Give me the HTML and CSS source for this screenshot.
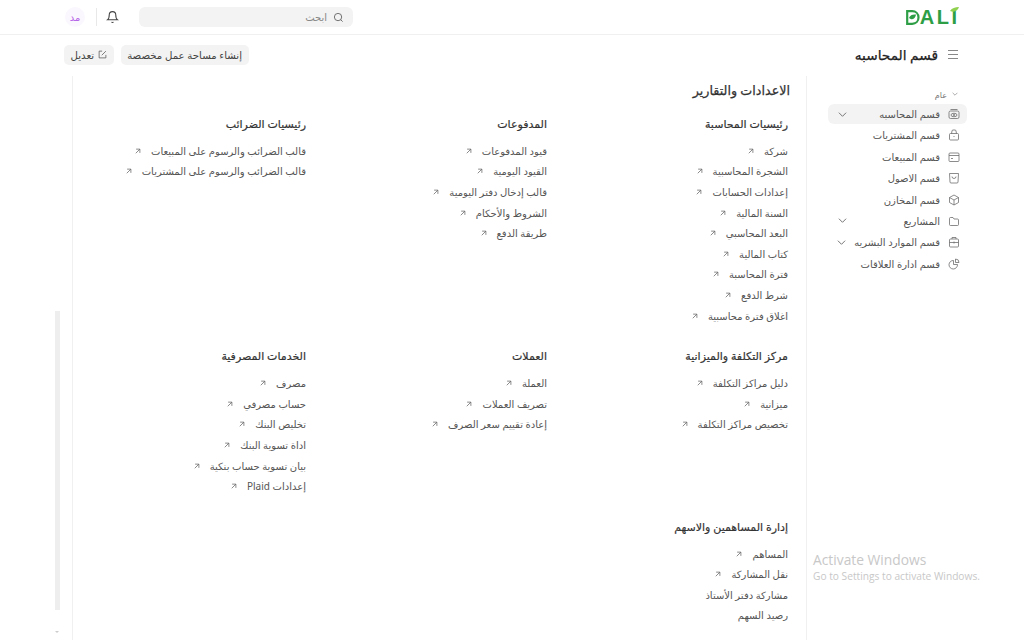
FILE: index.html
```html
<!DOCTYPE html>
<html lang="ar" dir="rtl">
<head>
  <meta charset="UTF-8" />
  <title>قسم المحاسبه</title>
  <link rel="stylesheet" href="styles.css">
</head>
<body>
  <svg class="defs" width="0" height="0">
    <symbol id="arrow" viewBox="0 0 8 8"><path d="M1.500 1.500h5v5M6.500 1.500L1 7"/></symbol>
    <symbol id="chev" viewBox="0 0 10 10"><path d="M1 3l4 4 4-4"/></symbol>
  </svg>

  <header class="topbar">
    <div class="logo" dir="ltr">
      <svg width="14" height="15" viewBox="0 0 14 15"><path d="M1.200 1.200h5c3.600 0 6.300 2.600 6.300 6.300s-2.700 6.300-6.300 6.300h-5z" fill="none" stroke="#2e9e46" stroke-width="2.200"/><path d="M3 8c1-3 4-4 7-3.500C9.500 8 7 11 3 8z" fill="#2e9e46"/></svg>
      <span class="logo-text">ALI</span>
      <svg class="leaf" width="9" height="6" viewBox="0 0 9 6"><path d="M0 4c2-3 5-4 9-4-1 3-4 6-9 4z" fill="#8fd14f"/></svg>
    </div>
    <div class="top-tools">
      <label class="search">
        <svg width="11" height="11" viewBox="0 0 24 24" fill="none" stroke="#666" stroke-width="2"><circle cx="11" cy="11" r="8"/><path d="M21 21l-4.300-4.300"/></svg>
        <span>ابحث</span>
      </label>
      <svg class="bell" width="13" height="14" viewBox="0 0 24 24" fill="none" stroke="#444" stroke-width="2"><path d="M6 8a6 6 0 0 1 12 0c0 7 3 9 3 9H3s3-2 3-9"/><path d="M10.300 21a1.900 1.900 0 0 0 3.400 0"/></svg>
      <span class="divider"></span>
      <div class="avatar">مد</div>
    </div>
  </header>

  <div class="page-head">
    <div class="page-title">
      <svg width="10" height="11" viewBox="0 0 10 11" stroke="#888" stroke-width="1"><path d="M0 1.500h10M0 5.500h10M0 9.500h10"/></svg>
      <h1>قسم المحاسبه</h1>
    </div>
    <div class="page-actions">
      <button class="btn">إنشاء مساحة عمل مخصصة</button>
      <button class="btn">
        <svg width="9" height="9" viewBox="0 0 24 24" fill="none" stroke="#555" stroke-width="2"><path d="M21 13v8H3V3h8"/><path d="M10 14L21 3"/></svg>
        تعديل
      </button>
    </div>
  </div>

  <div class="layout">
    <aside class="sidebar">
      <div class="side-label"><svg class="mini"><use href="#chev"/></svg>عام</div>
      <nav class="side-nav">
        <a class="side-item active"><svg class="ic" viewBox="0 0 24 24"><rect x="2" y="6" width="20" height="15" rx="3"/><path d="M5 3h14"/><ellipse cx="12" cy="14" rx="6" ry="3.500"/><circle cx="12" cy="14" r="1.500"/></svg><span>قسم المحاسبه</span><svg class="chev"><use href="#chev"/></svg></a>
        <a class="side-item"><svg class="ic" viewBox="0 0 24 24"><rect x="3" y="9" width="18" height="13" rx="2"/><path d="M7 9l1-5a2 2 0 0 1 2-2h4a2 2 0 0 1 2 2l1 5"/><path d="M11 15h2"/></svg><span>قسم المشتريات</span></a>
        <a class="side-item"><svg class="ic" viewBox="0 0 24 24"><rect x="2" y="4" width="20" height="17" rx="2"/><path d="M2 9h20M6 15h4"/></svg><span>قسم المبيعات</span></a>
        <a class="side-item"><svg class="ic" viewBox="0 0 24 24"><path d="M3 3h18l-1 17a2 2 0 0 1-2 2H6a2 2 0 0 1-2-2z"/><path d="M8 9a4 4 0 0 0 8 0"/></svg><span>قسم الاصول</span></a>
        <a class="side-item"><svg class="ic" viewBox="0 0 24 24"><path d="M12 2l9 5v10l-9 5-9-5V7z"/><path d="M3 7l9 5 9-5M12 12v10"/></svg><span>قسم المخازن</span></a>
        <a class="side-item"><svg class="ic" viewBox="0 0 24 24"><path d="M3 7a2 2 0 0 1 2-2h5l2 3h7a2 2 0 0 1 2 2v9a2 2 0 0 1-2 2H5a2 2 0 0 1-2-2z"/></svg><span>المشاريع</span><svg class="chev"><use href="#chev"/></svg></a>
        <a class="side-item"><svg class="ic" viewBox="0 0 24 24"><rect x="3" y="6" width="18" height="16" rx="2"/><path d="M8 6V3h8v3M3 13h18M12 11v4"/></svg><span>قسم الموارد البشريه</span><svg class="chev"><use href="#chev"/></svg></a>
        <a class="side-item"><svg class="ic" viewBox="0 0 24 24"><path d="M11 5a8.500 8.500 0 1 0 8 8h-8z"/><path d="M15 2a7 7 0 0 1 7 7h-7z"/></svg><span>قسم ادارة العلاقات</span></a>
      </nav>
    </aside>

    <main class="content">
      <h2 class="content-title">الاعدادات والتقارير</h2>
      <div class="card-grid">
        <section class="card">
          <h3>رئيسيات المحاسبة</h3>
          <ul>
            <li>شركة<svg class="arrow"><use href="#arrow"/></svg></li>
            <li>الشجرة المحاسبية<svg class="arrow"><use href="#arrow"/></svg></li>
            <li>إعدادات الحسابات<svg class="arrow"><use href="#arrow"/></svg></li>
            <li>السنة المالية<svg class="arrow"><use href="#arrow"/></svg></li>
            <li>البعد المحاسبي<svg class="arrow"><use href="#arrow"/></svg></li>
            <li>كتاب المالية<svg class="arrow"><use href="#arrow"/></svg></li>
            <li>فترة المحاسبة<svg class="arrow"><use href="#arrow"/></svg></li>
            <li>شرط الدفع<svg class="arrow"><use href="#arrow"/></svg></li>
            <li>اغلاق فترة محاسبية<svg class="arrow"><use href="#arrow"/></svg></li>
          </ul>
        </section>
        <section class="card">
          <h3>المدفوعات</h3>
          <ul>
            <li>قيود المدفوعات<svg class="arrow"><use href="#arrow"/></svg></li>
            <li>القيود اليومية<svg class="arrow"><use href="#arrow"/></svg></li>
            <li>قالب إدخال دفتر اليومية<svg class="arrow"><use href="#arrow"/></svg></li>
            <li>الشروط والأحكام<svg class="arrow"><use href="#arrow"/></svg></li>
            <li>طريقة الدفع<svg class="arrow"><use href="#arrow"/></svg></li>
          </ul>
        </section>
        <section class="card">
          <h3>رئيسيات الضرائب</h3>
          <ul>
            <li>قالب الضرائب والرسوم على المبيعات<svg class="arrow"><use href="#arrow"/></svg></li>
            <li>قالب الضرائب والرسوم على المشتريات<svg class="arrow"><use href="#arrow"/></svg></li>
          </ul>
        </section>
        <section class="card">
          <h3>مركز التكلفة والميزانية</h3>
          <ul>
            <li>دليل مراكز التكلفة<svg class="arrow"><use href="#arrow"/></svg></li>
            <li>ميزانية<svg class="arrow"><use href="#arrow"/></svg></li>
            <li>تخصيص مراكز التكلفة<svg class="arrow"><use href="#arrow"/></svg></li>
          </ul>
        </section>
        <section class="card">
          <h3>العملات</h3>
          <ul>
            <li>العملة<svg class="arrow"><use href="#arrow"/></svg></li>
            <li>تصريف العملات<svg class="arrow"><use href="#arrow"/></svg></li>
            <li>إعادة تقييم سعر الصرف<svg class="arrow"><use href="#arrow"/></svg></li>
          </ul>
        </section>
        <section class="card">
          <h3>الخدمات المصرفية</h3>
          <ul>
            <li>مصرف<svg class="arrow"><use href="#arrow"/></svg></li>
            <li>حساب مصرفي<svg class="arrow"><use href="#arrow"/></svg></li>
            <li>تخليص البنك<svg class="arrow"><use href="#arrow"/></svg></li>
            <li>اداة تسوية البنك<svg class="arrow"><use href="#arrow"/></svg></li>
            <li>بيان تسوية حساب بنكية<svg class="arrow"><use href="#arrow"/></svg></li>
            <li>إعدادات Plaid<svg class="arrow"><use href="#arrow"/></svg></li>
          </ul>
        </section>
        <section class="card">
          <h3>إدارة المساهمين والاسهم</h3>
          <ul>
            <li>المساهم<svg class="arrow"><use href="#arrow"/></svg></li>
            <li>نقل المشاركة<svg class="arrow"><use href="#arrow"/></svg></li>
            <li>مشاركة دفتر الأستاذ</li>
            <li>رصيد السهم</li>
          </ul>
        </section>
      </div>
    </main>

    <div class="gutter">
      <div class="scroll-thumb"></div>
      <div class="scroll-arrow"></div>
    </div>
  </div>

  <div class="activate" dir="ltr">
    <div class="activate-title">Activate Windows</div>
    <div class="activate-sub">Go to Settings to activate Windows.</div>
  </div>
</body>
</html>
```

FILE: styles.css
```css
* {
  box-sizing: border-box;
}
body {
  margin: 0;
  height: 640px;
  overflow: hidden;
  background: #fff;
  color: #555;
  font-family: "Noto Sans", "DejaVu Sans", sans-serif;
  font-size: 10px;
}
.defs {
  position: absolute;
}
.topbar {
  height: 35px;
  border-bottom: 1px solid #f0f0f0;
  display: flex;
  align-items: center;
  justify-content: space-between;
  padding: 0 67px 0 65px;
}
.logo {
  position: relative;
  display: flex;
  align-items: center;
}
.logo-text {
  font-family: "Liberation Sans", sans-serif;
  font-weight: bold;
  font-size: 20px;
  line-height: 15px;
  letter-spacing: 2.5px;
  margin-right: -2.5px;
  color: #2e9e46;
}
.leaf {
  position: absolute;
  right: -2px;
  top: -3px;
}
.top-tools {
  display: flex;
  align-items: center;
}
.search {
  width: 214px;
  height: 20px;
  margin-left: 20px;
  background: #f3f3f3;
  border-radius: 6px;
  display: flex;
  align-items: center;
  gap: 6px;
  padding: 0 9px;
  color: #888;
}
.bell {
  margin-left: 9px;
}
.divider {
  width: 1px;
  height: 18px;
  margin-left: 11px;
  background: #e8e8e8;
}
.avatar {
  width: 20px;
  height: 20px;
  border-radius: 50%;
  background: #fbf7fe;
  color: #b565e8;
  display: flex;
  align-items: center;
  justify-content: center;
}
.page-head {
  height: 41px;
  display: flex;
  align-items: center;
  justify-content: space-between;
  padding: 0 66px 2px 64px;
}
.page-title {
  display: flex;
  align-items: center;
  gap: 10px;
}
.page-title h1 {
  margin: 0;
  font-size: 13.7px;
  font-weight: 500;
  color: #222;
  -webkit-text-stroke: 0.25px #222;
}
.page-actions {
  display: flex;
  gap: 7px;
}
.btn {
  height: 20px;
  padding: 0 6.5px;
  border: 0;
  border-radius: 5px;
  background: #f3f3f3;
  color: #444;
  font: inherit;
  font-size: 10.2px;
  display: flex;
  align-items: center;
  gap: 4px;
}
.layout {
  display: flex;
  height: 564px;
}
.sidebar {
  width: 218px;
  flex: none;
  padding: 12px 57px 0 21px;
  border-left: 1px solid #f0f0f0;
}
.side-label {
  display: flex;
  align-items: center;
  gap: 5px;
  height: 12px;
  font-size: 8px;
  color: #777;
  margin-bottom: 4px;
  padding-right: 9px;
}
.mini {
  width: 6px;
  height: 6px;
  fill: none;
  stroke: #777;
}
.side-nav {
  display: flex;
  flex-direction: column;
  gap: 1.4px;
}
.side-item {
  height: 20px;
  display: flex;
  align-items: center;
  gap: 8px;
  padding: 0 7px;
  border-radius: 6px;
  color: #555;
  white-space: nowrap;
}
.side-item.active {
  background: #f3f3f3;
}
.ic {
  width: 12px;
  height: 12px;
  flex: none;
  fill: none;
  stroke: #666;
  stroke-width: 1.5;
}
.chev {
  width: 9px;
  height: 9px;
  flex: none;
  margin-right: auto;
  margin-left: 3px;
  fill: none;
  stroke: #666;
}
.content {
  width: 734px;
  flex: none;
  padding: 4px 18px 0 0;
  border-left: 1px solid #f0f0f0;
}
.content-title {
  margin: 0 -2px 14px 0;
  height: 20px;
  line-height: 20px;
  font-size: 12.7px;
  font-weight: 500;
  color: #333;
  -webkit-text-stroke: 0.25px #333;
}
.card-grid {
  display: grid;
  grid-template-columns: 241px 241px 200px;
  row-gap: 20.5px;
}
.card h3 {
  margin: 0 0 6.5px;
  height: 20px;
  line-height: 20px;
  font-size: 11px;
  font-weight: 500;
  color: #333;
  -webkit-text-stroke: 0.2px #333;
}
.card ul {
  margin: 0;
  padding: 0;
  list-style: none;
}
.card li {
  height: 20.6px;
  display: flex;
  align-items: center;
  gap: 10px;
  color: #555;
}
.arrow {
  width: 6px;
  height: 6px;
  fill: none;
  stroke: #666;
}
.gutter {
  flex: 1;
  position: relative;
}
.scroll-thumb {
  position: absolute;
  left: 55px;
  top: 235px;
  width: 5px;
  height: 299px;
  background: #eee;
}
.scroll-arrow {
  position: absolute;
  left: 55px;
  top: 555px;
  border: 2px solid transparent;
  border-top: 2px solid #ccc;
}
.activate {
  position: absolute;
  left: 813px;
  top: 552px;
  color: #c8c8c8;
  font-family: "Open Sans", sans-serif;
  pointer-events: none;
}
.activate-title {
  font-size: 13.8px;
  line-height: 16px;
}
.activate-sub {
  font-size: 10.2px;
  line-height: 16px;
}
```
